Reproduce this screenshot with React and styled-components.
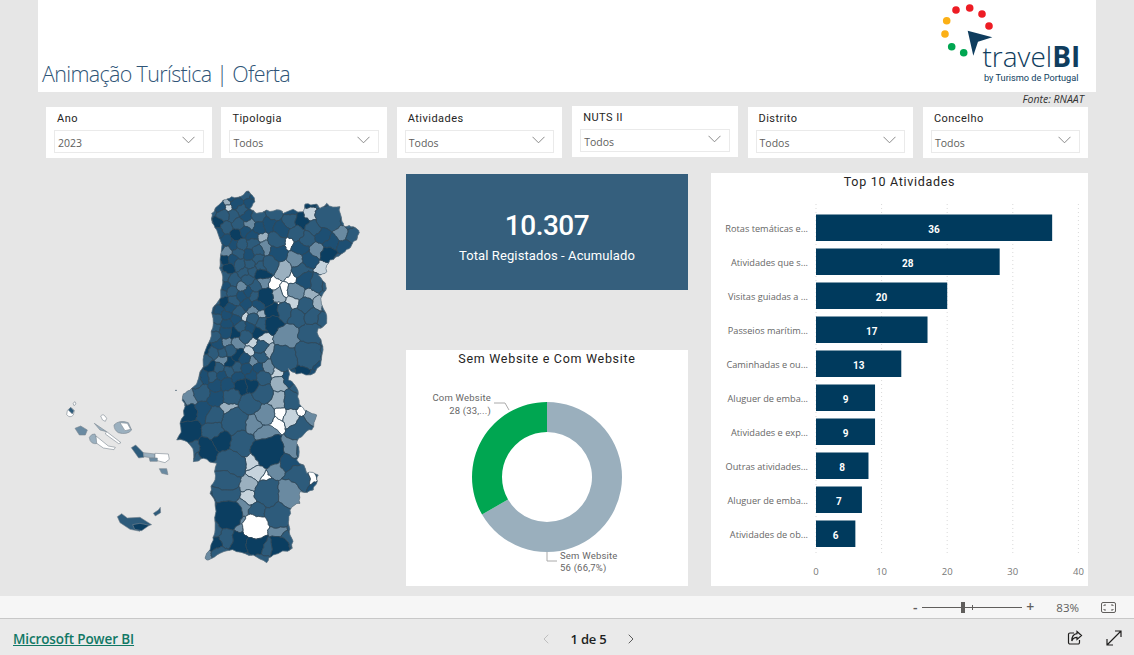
import React from "react";
import styled, { createGlobalStyle } from "styled-components";
import { ChevronLeft, ChevronRight } from "lucide-react";

const GlobalStyle = createGlobalStyle`
  html, body {
    margin: 0;
    height: 100%;
    overflow: hidden;
    background: #e6e6e6;
  }
`;

const din = `Roboto, "Liberation Sans", sans-serif`;
const segoe = `"Open Sans", "Liberation Sans", sans-serif`;

/* ---------- map data ---------- */

const SHADES = {
  a: "#2d5b7b",
  b: "#1d4f73",
  d: "#0b3e61",
  m: "#6a8aa1",
  l: "#9bb0bf",
  c: "#c6d3dc",
  w: "#ffffff",
};

// how much room a shade takes against its neighbours (power diagram weight)
const WEIGHTS = { w: -70, c: -30, l: -30, m: -10, a: 0, b: 0, d: 0 };

// outline, in 3x coordinates read from the picture (x - 40, y - 180)
const OUTLINE = [
  [515, 100], [530, 80], [550, 60], [575, 50], [610, 45], [625, 33], [640, 50], [645, 65], [630, 85], [650, 100],
  [680, 90], [720, 90], [730, 100], [790, 95], [795, 72], [830, 72], [840, 85], [860, 70], [900, 80], [905, 120],
  [915, 140], [940, 140], [958, 158], [935, 195], [915, 215], [890, 230], [870, 240], [860, 275], [835, 285], [858, 320],
  [850, 340], [858, 400], [860, 430], [835, 445], [845, 490], [845, 530], [825, 578], [770, 582], [745, 565], [745, 600],
  [760, 610], [775, 640], [785, 680], [805, 695], [830, 705], [815, 750], [790, 765], [770, 790], [770, 840], [800, 880],
  [835, 885], [830, 910], [820, 930], [780, 935], [780, 970], [750, 990], [745, 1030], [750, 1065], [757, 1105], [700, 1125],
  [680, 1148], [640, 1125], [590, 1115], [540, 1120], [505, 1140], [495, 1135], [520, 1080], [525, 1050], [525, 975], [510, 940],
  [525, 900], [530, 850], [490, 835], [460, 845], [450, 795], [410, 780], [420, 730], [435, 680], [430, 642], [455, 625],
  [490, 560], [510, 480], [520, 430], [530, 370], [548, 290], [540, 240], [530, 150], [515, 120],
].map(([x, y]) => [40 + x / 3, 180 + y / 3]);

// municipalities whose shade can be read off the picture, in page pixels
const KNOWN = [
  [311, 215, "c"], [330, 217, "a", 120], [342, 233, "m"], [353, 235, "a"], [262, 237, "l"], [290, 243, "w"], [317, 250, "m"],
  [265, 248, "m"], [297, 259, "m"], [323, 268, "c"], [283, 269, "l"], [293, 277, "w"], [272, 285, "w"], [285, 292, "w"],
  [262, 282, "m"], [297, 292, "m"], [310, 295, "l"], [319, 304, "l"], [278, 296, "l"], [278, 301, "w"], [293, 303, "c"],
  [317, 283, "a"], [264, 298, "d", 40], [224, 302, "d"], [235, 333, "d"], [245, 317, "c"], [253, 310, "m"], [260, 315, "l"],
  [242, 287, "m"], [218, 223, "d"], [237, 235, "d"], [228, 268, "d"], [225, 260, "d"], [227, 202, "l"], [228, 208, "c"],
  [227, 343, "m"], [237, 343, "m"], [253, 343, "c"], [263, 340, "c"], [250, 352, "c"], [267, 352, "l"], [253, 362, "m"],
  [267, 367, "m"], [288, 338, "m", 60], [285, 358, "a", 120], [308, 355, "a", 140], [312, 335, "a", 60], [238, 377, "b"], [278, 372, "c"],
  [280, 382, "l"], [228, 408, "l"], [280, 414, "w"], [275, 422, "w"], [301, 412, "w"], [292, 417, "c"], [312, 418, "m"],
  [302, 428, "a", 60], [265, 415, "m"], [253, 425, "m"], [265, 435, "m"], [293, 448, "m"], [235, 422, "a", 100], [250, 403, "a"],
  [278, 400, "l"], [293, 400, "a"], [188, 413, "d"], [187, 430, "d", 60], [203, 412, "b"], [215, 430, "a"], [222, 440, "d"],
  [207, 450, "d"], [242, 443, "a", 60], [268, 452, "d", 160], [288, 463, "b"], [253, 463, "c"], [257, 473, "c"], [264, 477, "w"],
  [277, 468, "m"], [297, 480, "a", 80], [312, 479, "w"], [230, 465, "a", 120], [227, 480, "a", 60], [227, 493, "a", 60], [249, 485, "l"],
  [249, 498, "c"], [268, 493, "a", 100], [289, 493, "m", 100], [228, 515, "d", 140], [257, 512, "a"], [243, 508, "m"], [278, 515, "a", 100],
  [243, 525, "m"], [255, 527, "w", 110], [278, 532, "m"], [227, 538, "a"], [213, 543, "d"], [240, 542, "d", 60], [257, 543, "d", 60],
  [278, 547, "d", 60], [267, 547, "a"], [286, 540, "a"],
];

const ISLANDS = [
  ["M82 92 Q92 76 103 92 L100 105 Q90 116 80 104 Z", "w"],
  ["M85 90 L92 82 L102 92 L97 102 Z", "a"],
  ["M99 70 L105 65 L108 72 L102 77 Z", "w"],
  ["M182 108 Q190 98 200 115 L196 124 Q186 124 182 108 Z", "w"],
  ["M105 145 L122 138 L142 150 L136 165 L118 165 Z", "m"],
  ["M163 130 L200 155 L180 150 Z", "l"],
  ["M200 155 L243 188 L236 191 L196 162 Z", "w"],
  ["M222 135 Q238 118 265 128 L275 150 Q262 166 235 158 Q222 150 222 135 Z", "l"],
  ["M240 128 L262 130 L272 148 L255 152 Z", "w"],
  ["M148 172 Q155 160 165 162 L176 190 Q150 196 148 172 Z", "l"],
  ["M168 168 L205 198 L226 202 L222 209 L190 204 L170 190 Z", "w"],
  ["M274 203 L287 195 L310 218 L312 232 L296 234 Z", "a"],
  ["M310 218 L345 222 L345 235 L312 230 Z", "l"],
  ["M345 220 L385 222 L388 238 L375 248 L345 240 Z", "w"],
  ["M328 234 L352 234 L352 244 L330 244 Z", "m"],
  ["M358 266 L380 266 L384 284 L365 280 Z", "m"],
  ["M232 410 L245 401 L262 414 L300 412 L335 434 L310 442 L300 454 L270 448 L240 428 Z", "a"],
  ["M278 434 L300 430 L328 436 L305 452 L284 448 Z", "d"],
  ["M340 400 L355 390 L361 382 L362 398 L346 408 Z", "a"],
];

/* ---------- map geometry, worked out once ---------- */

const random = (() => {
  let s = 20230;
  return () => {
    s = (s + 0x6d2b79f5) | 0;
    let t = Math.imul(s ^ (s >>> 15), 1 | s);
    t = (t + Math.imul(t ^ (t >>> 7), 61 | t)) ^ t;
    return ((t ^ (t >>> 14)) >>> 0) / 4294967296;
  };
})();

const fillerSpacing = (x, y) => (y > 385 ? 12 : x < 262 ? 7.5 : 11);

const buildSeeds = () => {
  const seeds = KNOWN.map(([x, y, c, w]) => ({ x, y, c, w: w ?? WEIGHTS[c] }));
  for (let y = 186; y < 570; y += 4) {
    for (let x = 176; x < 362; x += 4) {
      const px = x + random() * 3;
      const py = y + random() * 3;
      const r = fillerSpacing(px, py);
      if (seeds.some((s) => Math.hypot(s.x - px, s.y - py) < r * (s.w > 50 ? 1.7 : 1))) continue;
      const v = random();
      const north = py < 385 && px < 262;
      const c = v < 0.58 ? "a" : v < 0.88 ? "b" : v < (north ? 0.98 : 0.95) ? "d" : "m";
      seeds.push({ x: px, y: py, c, w: 0 });
    }
  }
  return seeds;
};

const clipHalf = (poly, a, b) => {
  const nx = b.x - a.x;
  const ny = b.y - a.y;
  const t = 0.5 + (a.w - b.w) / (2 * (nx * nx + ny * ny));
  const mx = a.x + nx * t;
  const my = a.y + ny * t;
  const side = ([x, y]) => (x - mx) * nx + (y - my) * ny;
  const out = [];
  poly.forEach((p, i) => {
    const q = poly[(i + 1) % poly.length];
    const sp = side(p);
    const sq = side(q);
    if (sp <= 0) out.push(p);
    if (sp < 0 !== sq < 0) {
      const f = sp / (sp - sq);
      out.push([p[0] + (q[0] - p[0]) * f, p[1] + (q[1] - p[1]) * f]);
    }
  });
  return out;
};

const hash = (text) => {
  let h = 7;
  for (let i = 0; i < text.length; i++) h = (h * 31 + text.charCodeAt(i)) | 0;
  return Math.abs(h);
};

// wobble an edge the same way from both sides, so neighbours keep sharing it
const wobble = (p, q, depth) => {
  const len = Math.hypot(q[0] - p[0], q[1] - p[1]);
  if (depth === 0 || len < 1.6) return [p];
  const forward = p[0] < q[0] || (p[0] === q[0] && p[1] < q[1]);
  const [a, b] = forward ? [p, q] : [q, p];
  const key = `${a[0].toFixed(1)},${a[1].toFixed(1)},${b[0].toFixed(1)},${b[1].toFixed(1)}`;
  const amount = ((hash(key) % 100) / 100 - 0.5) * 0.34;
  const mid = [(a[0] + b[0]) / 2 - (b[1] - a[1]) * amount, (a[1] + b[1]) / 2 + (b[0] - a[0]) * amount];
  return [...wobble(p, mid, depth - 1), ...wobble(mid, q, depth - 1)];
};

const toPath = (poly, depth) => {
  const points = poly.flatMap((p, i) => wobble(p, poly[(i + 1) % poly.length], depth));
  return `M${points.map(([x, y]) => `${x.toFixed(1)} ${y.toFixed(1)}`).join("L")}Z`;
};

const seeds = buildSeeds();
const BOUNDS = [[160, 170], [380, 170], [380, 580], [160, 580]];
const CELLS = seeds
  .map((s) => ({
    c: s.c,
    poly: seeds.reduce((poly, o) => (o === s || poly.length === 0 ? poly : clipHalf(poly, s, o)), BOUNDS),
  }))
  .filter((cell) => cell.poly.length > 2)
  .map((cell) => ({ c: cell.c, d: toPath(cell.poly, 3) }));
const OUTLINE_PATH = toPath(OUTLINE, 2);

/* ---------- chart data ---------- */

const ACTIVITIES = [
  ["Rotas temáticas e...", 36],
  ["Atividades que s...", 28],
  ["Visitas guiadas a ...", 20],
  ["Passeios marítim...", 17],
  ["Caminhadas e ou...", 13],
  ["Aluguer de emba...", 9],
  ["Atividades e exp...", 9],
  ["Outras atividades...", 8],
  ["Aluguer de emba...", 7],
  ["Atividades de ob...", 6],
];

const FILTERS = [
  ["Ano", "2023", 0],
  ["Tipologia", "Todos", 0],
  ["Atividades", "Todos", 0],
  ["NUTS II", "Todos", -1],
  ["Distrito", "Todos", 0],
  ["Concelho", "Todos", 0],
];

const X0 = 816;
const UNIT = 6.56;

const ringArc = (cx, cy, r1, r2, from, to) => {
  const pt = (r, a) => {
    const rad = ((a - 90) * Math.PI) / 180;
    return `${(cx + r * Math.cos(rad)).toFixed(2)} ${(cy + r * Math.sin(rad)).toFixed(2)}`;
  };
  const large = to - from > 180 ? 1 : 0;
  return `M${pt(r2, from)}A${r2} ${r2} 0 ${large} 1 ${pt(r2, to)}L${pt(r1, to)}A${r1} ${r1} 0 ${large} 0 ${pt(r1, from)}Z`;
};

/* ---------- styled parts ---------- */

const Page = styled.div`
  width: 1134px;
  height: 655px;
  display: flex;
  flex-direction: column;
  background: #e6e6e6;
`;
const Canvas = styled.main`
  height: 596px;
  display: flex;
  flex-direction: column;
`;
const Header = styled.header`
  height: 92px;
  margin-left: 38px;
  width: 1058px;
  background: #fff;
  display: flex;
  align-items: flex-end;
  justify-content: space-between;
`;
const Title = styled.h1`
  margin: 0 0 3px 4px;
  font-family: ${segoe};
  font-weight: 300;
  font-size: 21.5px;
  line-height: 30px;
  letter-spacing: -0.67px;
  color: #2f5577;
`;
const Logo = styled.svg`
  width: 158px;
  height: 92px;
  flex: none;
`;
const LogoWord = styled.text`
  font-family: ${segoe};
  font-size: 28px;
  font-weight: ${(p) => (p.$bold ? 700 : 300)};
  fill: #0f3d5e;
`;
const LogoTag = styled.text`
  font-family: ${din};
  font-size: 9.2px;
  font-weight: 400;
  fill: #0f3d5e;
`;
const Source = styled.div`
  height: 15px;
  padding-right: 50px;
  text-align: right;
  font-family: ${segoe};
  font-style: italic;
  font-size: 10.5px;
  line-height: 14px;
  color: #333;
`;
const FilterRow = styled.div`
  display: grid;
  grid-template-columns: repeat(6, 165.5px);
  column-gap: 9.9px;
  padding-left: 46px;
  height: 51px;
`;
const FilterCard = styled.div`
  height: 51px;
  box-sizing: border-box;
  padding: 5px 8px 0;
  background: #fff;
  margin-top: ${(p) => p.$shift}px;
`;
const FilterLabel = styled.div`
  font-family: ${din};
  font-size: 11px;
  line-height: 13px;
  letter-spacing: 0.45px;
  color: #252423;
  padding-left: 3px;
`;
const Select = styled.div`
  margin-top: 5px;
  height: 23px;
  box-sizing: border-box;
  border: 1px solid #eaeaea;
  padding: 2px 8px 0 3px;
  display: flex;
  align-items: center;
  justify-content: space-between;
  font-family: ${segoe};
  font-size: 10.5px;
  color: #605e5c;
`;
const Caret = styled.svg`
  width: 13px;
  height: 8px;
  margin-top: -5px;
`;
const Board = styled.div`
  margin-top: 15px;
  padding-left: 46px;
  display: grid;
  grid-template-columns: 360px 282px 400px;
  flex: 1;
`;
const MapPane = styled.svg`
  width: 360px;
  height: 413px;
  display: block;
  margin-top: 1px;
`;
const MiddleColumn = styled.div`
  display: flex;
  flex-direction: column;
  margin-top: 1px;
`;
const Kpi = styled.section`
  height: 116px;
  background: #355f7d;
  color: #fff;
  display: flex;
  flex-direction: column;
  align-items: center;
  padding-top: 34px;
  box-sizing: border-box;
`;
const KpiValue = styled.div`
  font-family: ${din};
  font-size: 28px;
  font-weight: 500;
  line-height: 36px;
  letter-spacing: -0.5px;
`;
const KpiLabel = styled.div`
  font-family: ${din};
  font-size: 13px;
  line-height: 18px;
  margin-top: 3px;
  letter-spacing: 0.1px;
`;
const Card = styled.section`
  background: #fff;
  margin-left: ${(p) => p.$left || 0}px;
  margin-top: ${(p) => p.$top || 0}px;
  height: ${(p) => p.$height}px;
  overflow: hidden;
`;
const CardTitle = styled.h2`
  margin: 0;
  height: ${(p) => p.$height}px;
  font-family: ${din};
  font-size: 12.5px;
  font-weight: 400;
  line-height: 17px;
  letter-spacing: 0.7px;
  text-align: center;
  color: #252423;
`;
const Chart = styled.svg`
  display: block;
`;
const SliceLabel = styled.text`
  font-family: ${din};
  font-size: 9.5px;
  letter-spacing: 0.2px;
  fill: #666;
`;
const CategoryLabel = styled.text`
  font-family: ${segoe};
  font-size: 9.2px;
  fill: #666;
  text-anchor: end;
`;
const TickLabel = styled.text`
  font-family: ${segoe};
  font-size: 9.5px;
  fill: #777;
  text-anchor: middle;
`;
const BarValue = styled.text`
  font-family: ${din};
  font-size: 10px;
  font-weight: 700;
  fill: #fff;
  text-anchor: middle;
`;
const ZoomBar = styled.div`
  height: 22px;
  background: #f6f6f6;
  border-bottom: 1px solid #c8c8c8;
  display: flex;
  align-items: center;
  justify-content: flex-end;
  padding-right: 18px;
  color: #605e5c;
  font-family: ${segoe};
`;
const ZoomSign = styled.span`
  width: 14px;
  text-align: center;
  font-size: 14px;
  line-height: 20px;
  font-weight: 600;
`;
const Slider = styled.div`
  position: relative;
  width: 100px;
  height: 1px;
  background: #605e5c;
  margin: 0 1px 0 0;
`;
const Thumb = styled.span`
  position: absolute;
  left: 39px;
  top: -5px;
  width: 4px;
  height: 11px;
  background: #605e5c;
`;
const Tick = styled.span`
  position: absolute;
  left: 50px;
  top: -2px;
  width: 1px;
  height: 5px;
  background: #605e5c;
`;
const Percent = styled.span`
  margin: 0 22px 0 19px;
  font-size: 11.5px;
`;
const FitIcon = styled.svg`
  width: 15px;
  height: 11px;
`;
const Footer = styled.footer`
  flex: 1;
  background: #eaeaea;
  display: grid;
  grid-template-columns: 525px 101px 1fr;
  align-items: center;
  padding: 3px 0 0 13px;
`;
const BrandLink = styled.a`
  font-family: ${segoe};
  font-size: 13.5px;
  font-weight: 600;
  letter-spacing: -0.12px;
  color: #117865;
  text-decoration: underline;
`;
const Pager = styled.nav`
  display: flex;
  align-items: center;
  justify-content: space-between;
  font-family: ${segoe};
  font-size: 13px;
  font-weight: 600;
  letter-spacing: -0.2px;
  color: #201f1e;
`;
const PagerArrow = styled.span`
  display: flex;
  color: ${(p) => (p.$off ? "#b8b8b8" : "#444")};
`;
const FooterTools = styled.div`
  display: flex;
  justify-content: flex-end;
  gap: 23px;
  padding-right: 12px;
  margin-top: -2px;
`;
const ToolIcon = styled.svg`
  width: 16px;
  height: 16px;
  fill: none;
  stroke: #201f1e;
  stroke-width: 1.2;
`;

/* ---------- pieces ---------- */

const TravelLogo = () => (
  <Logo viewBox="938 0 158 92">
    {[
      [956, 10, "#ed1c24"], [969.7, 8, "#ed1c24"], [982, 14, "#ed1c24"], [989, 26, "#ed1c24"],
      [946.7, 20.7, "#fbb016"], [945, 34, "#fbb016"], [951.7, 46.7, "#00a651"], [963.7, 52.7, "#00a651"],
    ].map(([cx, cy, fill]) => (
      <circle key={cx} cx={cx} cy={cy} r="3.8" fill={fill} />
    ))}
    <polygon points="967.7,30.7 992.3,37.3 978,41.7 973.3,55.7" fill="#0f3d5e" />
    <text x="982.5" y="67">
      <LogoWord as="tspan">travel</LogoWord>
      <LogoWord as="tspan" $bold>BI</LogoWord>
    </text>
    <LogoTag x="984" y="81">by Turismo de Portugal</LogoTag>
  </Logo>
);

const PortugalMap = () => (
  <MapPane viewBox="46 174 360 413">
    <defs>
      <clipPath id="mainland">
        <path d={OUTLINE_PATH} />
      </clipPath>
    </defs>
    <path d={OUTLINE_PATH} fill={SHADES.a} />
    <g clipPath="url(#mainland)">
      {CELLS.map((cell, i) => (
        <path key={i} d={cell.d} fill={SHADES[cell.c]} stroke="#32495a" strokeWidth="0.85" />
      ))}
    </g>
    <path d={OUTLINE_PATH} fill="none" stroke="#6f7f8b" strokeWidth="0.7" />
    <g transform="translate(40 380) scale(0.3333)">
      {ISLANDS.map(([d, c], i) => (
        <path key={i} d={d} fill={SHADES[c]} stroke="#7a8790" strokeWidth="1.8" strokeLinejoin="round" />
      ))}
      <circle cx="408" cy="31" r="2" fill="#1b3a50" />
    </g>
  </MapPane>
);

const WebsiteDonut = () => (
  <Chart width="282" height="221" viewBox="406 365 282 221">
    <path d={ringArc(547, 477, 45, 75, 0, 240)} fill="#9aafbd" />
    <path d={ringArc(547, 477, 45, 75, 240, 360)} fill="#00a651" />
    <polyline points="494,403 505,403 509,410" fill="none" stroke="#aaa" />
    <polyline points="547,552 547,561 557,561" fill="none" stroke="#aaa" />
    <SliceLabel x="491" y="401" textAnchor="end">Com Website</SliceLabel>
    <SliceLabel x="491" y="414" textAnchor="end">28 (33,...)</SliceLabel>
    <SliceLabel x="560" y="559">Sem Website</SliceLabel>
    <SliceLabel x="560" y="571">56 (66,7%)</SliceLabel>
  </Chart>
);

const ActivitiesChart = () => (
  <Chart width="377" height="396" viewBox="711 190 377 396">
    {[0, 10, 20, 30, 40].map((tick) => (
      <g key={tick}>
        <line
          x1={X0 + tick * UNIT}
          x2={X0 + tick * UNIT}
          y1="204"
          y2="554"
          stroke="#d9d9d9"
          strokeDasharray="1 3"
        />
        <TickLabel x={X0 + tick * UNIT} y="575">{tick}</TickLabel>
      </g>
    ))}
    {ACTIVITIES.map(([label, value], i) => {
      const top = 214.5 + i * 34;
      const width = value * UNIT;
      return (
        <g key={i}>
          <CategoryLabel x="808" y={top + 17}>{label}</CategoryLabel>
          <rect x={X0} y={top} width={width} height="26.5" fill="#003a5d" />
          <BarValue x={X0 + width / 2} y={top + 18}>{value}</BarValue>
        </g>
      );
    })}
  </Chart>
);

const App = () => (
  <Page>
    <GlobalStyle />
    <Canvas>
      <Header>
        <Title>Animação Turística | Oferta</Title>
        <TravelLogo />
      </Header>
      <Source>Fonte: RNAAT</Source>
      <FilterRow>
        {FILTERS.map(([label, value, shift]) => (
          <FilterCard key={label} $shift={shift}>
            <FilterLabel>{label}</FilterLabel>
            <Select>
              {value}
              <Caret viewBox="0 0 13 8">
                <path d="M0.5 0.8 L6.5 6.8 L12.5 0.8" fill="none" stroke="#7d7d7d" strokeWidth="0.9" />
              </Caret>
            </Select>
          </FilterCard>
        ))}
      </FilterRow>
      <Board>
        <PortugalMap />
        <MiddleColumn>
          <Kpi>
            <KpiValue>10.307</KpiValue>
            <KpiLabel>Total Registados - Acumulado</KpiLabel>
          </Kpi>
          <Card $top={60} $height={236}>
            <CardTitle $height={15}>Sem Website e Com Website</CardTitle>
            <WebsiteDonut />
          </Card>
        </MiddleColumn>
        <Card $left={23} $height={413}>
          <CardTitle $height={17}>Top 10 Atividades</CardTitle>
          <ActivitiesChart />
        </Card>
      </Board>
    </Canvas>
    <ZoomBar>
      <ZoomSign>-</ZoomSign>
      <Slider>
        <Thumb />
        <Tick />
      </Slider>
      <ZoomSign>+</ZoomSign>
      <Percent>83%</Percent>
      <FitIcon viewBox="0 0 15 11">
        <rect x="0.5" y="0.5" width="14" height="10" rx="1.5" fill="none" stroke="#605e5c" />
        <path d="M3 4V3H5M10 3H12V4M12 7V8H10M5 8H3V7" fill="none" stroke="#605e5c" />
      </FitIcon>
    </ZoomBar>
    <Footer>
      <BrandLink href="#">Microsoft Power BI</BrandLink>
      <Pager>
        <PagerArrow $off><ChevronLeft size={16} strokeWidth={1.3} /></PagerArrow>
        1 de 5
        <PagerArrow><ChevronRight size={16} strokeWidth={1.3} /></PagerArrow>
      </Pager>
      <FooterTools>
        <ToolIcon viewBox="0 0 16 16">
          <path d="M7 3H3a1.5 1.5 0 0 0-1.5 1.5v8A1.5 1.5 0 0 0 3 14h8a1.5 1.5 0 0 0 1.5-1.5V10" />
          <path d="M10 1.5 14.5 5.5 10 9.5V7.4C7.5 7.4 5.8 8.4 4.8 11 4.8 7 6.8 4 10 3.7Z" />
        </ToolIcon>
        <ToolIcon viewBox="0 0 16 16">
          <path d="M15 1 1 15M9 1h6v6M1 9v6h6" />
        </ToolIcon>
      </FooterTools>
    </Footer>
  </Page>
);

export default App;
